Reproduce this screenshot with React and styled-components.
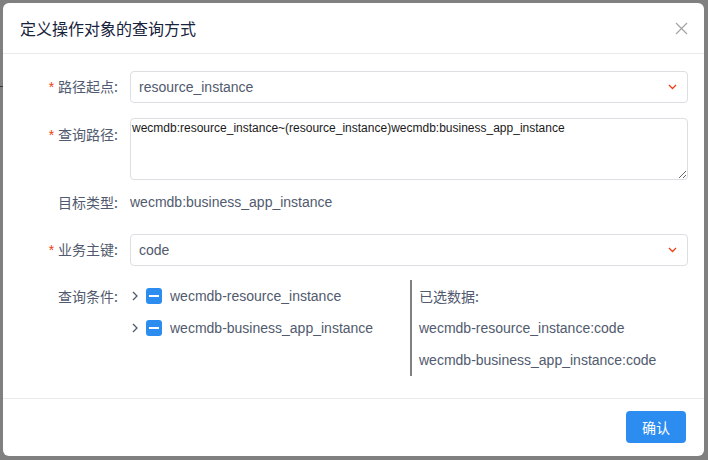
import React from 'react';
import styled, { createGlobalStyle } from 'styled-components';

const GlobalStyle = createGlobalStyle`
  html, body {
    margin: 0;
    padding: 0;
    background: #808080;
    font-family: "Liberation Sans", "Noto Sans CJK SC", sans-serif;
  }
  * { box-sizing: border-box; }
`;

const Page = styled.div`
  width: 708px;
  height: 460px;
  padding: 3px 4px 4px 3px;
  position: relative;
`;

const PageLine = styled.div`
  position: absolute;
  left: 0;
  top: 86px;
  width: 3px;
  height: 1px;
  background: #3a3a3a;
`;

const Modal = styled.div`
  background: #fff;
  border-radius: 6px;
  height: 453px;
  display: flex;
  flex-direction: column;
`;

const Header = styled.div`
  height: 51px;
  border-bottom: 1px solid #e8eaec;
  display: flex;
  align-items: center;
  justify-content: space-between;
  padding: 0 16px 0 17px;
`;

const Title = styled.div`
  font-family: "Noto Sans CJK SC", sans-serif;
  font-size: 16px;
  color: #17233d;
`;

const Close = styled.div`
  width: 14px;
  height: 14px;
  display: flex;
  align-items: center;
  justify-content: center;
`;

const Body = styled.div`
  flex: 1;
  padding: 16px 16px 0 16px;
`;

const Item = styled.div`
  display: flex;
  align-items: ${p => (p.$top ? 'flex-start' : 'center')};
  margin-bottom: ${p => p.$gap}px;
  min-height: 32px;
`;

const Label = styled.div`
  width: 111px;
  flex-shrink: 0;
  text-align: right;
  padding-right: 12px;
  font-family: "Noto Sans CJK SC", sans-serif;
  font-size: 14px;
  color: #515a6e;
  line-height: 32px;
`;

const Star = styled.span`
  color: #ed4014;
  margin-right: 4px;
  font-family: "Liberation Sans", sans-serif;
`;

const Select = styled.div`
  flex: 1;
  height: 32px;
  border: 1px solid #dcdee2;
  border-radius: 4px;
  display: flex;
  align-items: center;
  justify-content: space-between;
  padding: 0 10px 0 8px;
  font-size: 14px;
  color: #515a6e;
`;

const TextArea = styled.textarea`
  flex: 1;
  height: 62px;
  border: 1px solid #dcdee2;
  border-radius: 4px;
  padding: 2px 1px;
  font-family: "Liberation Sans", sans-serif;
  font-size: 12px;
  color: #1a1a1a;
  resize: vertical;
  outline: none;
  margin: 0;
`;

const Value = styled.div`
  font-size: 14px;
  color: #515a6e;
  line-height: 32px;
`;

const Split = styled.div`
  flex: 1;
  display: flex;
`;

const Tree = styled.div`
  width: 280px;
`;

const Node = styled.div`
  height: 32px;
  display: flex;
  align-items: center;
  padding-left: 2px;
  font-size: 14px;
  color: #515a6e;
`;

const Arrow = styled.span`
  width: 14px;
  display: flex;
  align-items: center;
`;

const Check = styled.span`
  width: 16px;
  height: 16px;
  border-radius: 3px;
  background: #2d8cf0;
  display: flex;
  align-items: center;
  justify-content: center;
  margin-right: 8px;
  &::after {
    content: '';
    width: 10px;
    height: 2px;
    background: #fff;
  }
`;

const Divider = styled.div`
  width: 2px;
  background: #808080;
  margin-right: 7px;
  height: 96px;
`;

const Selected = styled.div`
  flex: 1;
`;

const SelLine = styled.div`
  height: 32px;
  line-height: 32px;
  font-size: 14px;
  color: #515a6e;
  font-family: ${p => (p.$cn ? '"Noto Sans CJK SC", sans-serif' : 'inherit')};
`;

const Footer = styled.div`
  height: 58px;
  border-top: 1px solid #e8eaec;
  display: flex;
  align-items: center;
  justify-content: flex-end;
  padding: 0 18px 1px 0;
`;

const Button = styled.button`
  width: 60px;
  height: 32px;
  border: none;
  border-radius: 4px;
  background: #2d8cf0;
  color: #fff;
  font-family: "Noto Sans CJK SC", sans-serif;
  font-size: 14px;
`;

const Chevron = () => (
  <svg width="9" height="6" viewBox="0 0 9 6">
    <path d="M1 1l3.5 3.5L8 1" fill="none" stroke="#ed4014" strokeWidth="1.3" />
  </svg>
);

const Right = () => (
  <svg width="6" height="10" viewBox="0 0 6 10">
    <path d="M1 1l4 4-4 4" fill="none" stroke="#515a6e" strokeWidth="1.3" />
  </svg>
);

export default function App() {
  return (
    <>
      <GlobalStyle />
      <Page>
        <PageLine />
        <Modal>
          <Header>
            <Title>定义操作对象的查询方式</Title>
            <Close>
              <svg width="13" height="13" viewBox="0 0 13 13">
                <path d="M1 1l11 11M12 1L1 12" stroke="#a3a3a3" strokeWidth="1.2" />
              </svg>
            </Close>
          </Header>
          <Body>
            <Item $gap={15}>
              <Label><Star>*</Star>路径起点:</Label>
              <Select>resource_instance<Chevron /></Select>
            </Item>
            <Item $gap={6} $top>
              <Label><Star>*</Star>查询路径:</Label>
              <TextArea
                readOnly
                defaultValue="wecmdb:resource_instance~(resource_instance)wecmdb:business_app_instance"
              />
            </Item>
            <Item $gap={15}>
              <Label>目标类型:</Label>
              <Value>wecmdb:business_app_instance</Value>
            </Item>
            <Item $gap={14}>
              <Label><Star>*</Star>业务主键:</Label>
              <Select>code<Chevron /></Select>
            </Item>
            <Item $gap={0} $top>
              <Label>查询条件:</Label>
              <Split>
                <Tree>
                  <Node><Arrow><Right /></Arrow><Check />wecmdb-resource_instance</Node>
                  <Node><Arrow><Right /></Arrow><Check />wecmdb-business_app_instance</Node>
                </Tree>
                <Divider />
                <Selected>
                  <SelLine $cn>已选数据:</SelLine>
                  <SelLine>wecmdb-resource_instance:code</SelLine>
                  <SelLine>wecmdb-business_app_instance:code</SelLine>
                </Selected>
              </Split>
            </Item>
          </Body>
          <Footer>
            <Button>确认</Button>
          </Footer>
        </Modal>
      </Page>
    </>
  );
}
